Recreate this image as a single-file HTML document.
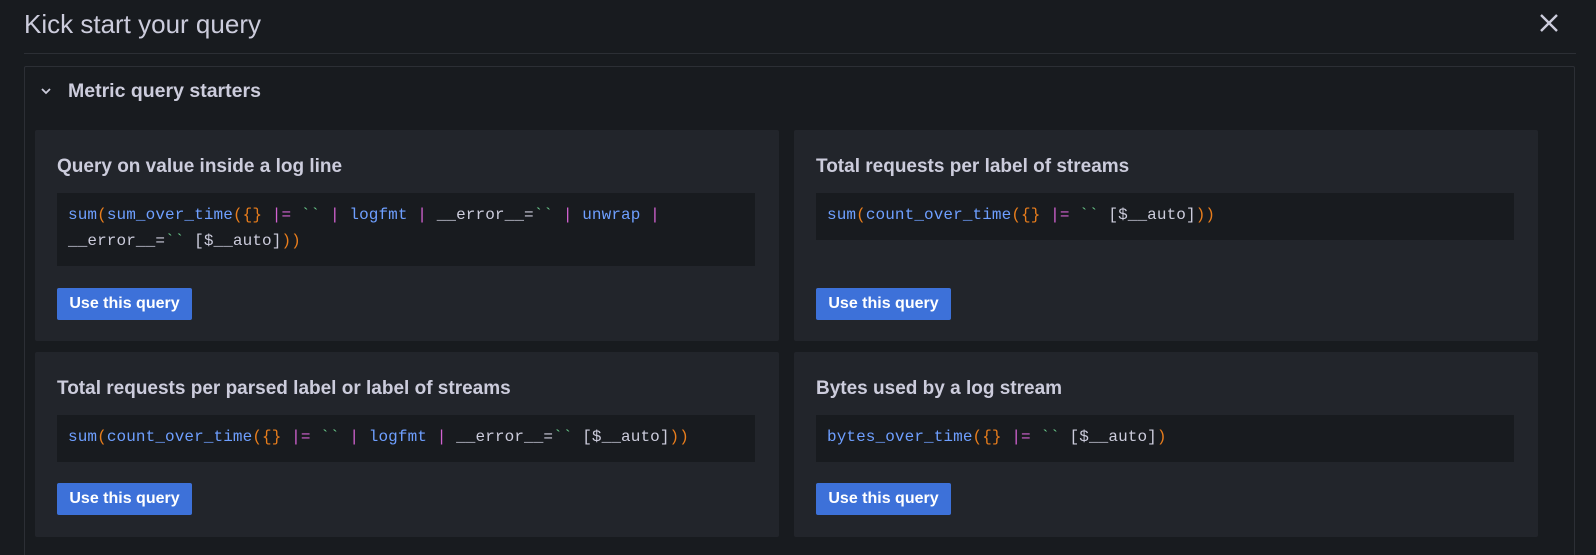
<!DOCTYPE html>
<html><head><style>
html,body{margin:0;width:1596px;height:555px;overflow:hidden}
body{background:#181b1f;font-family:"Liberation Sans",sans-serif;position:relative;color:#ccccdc}
.h{position:absolute;left:24px;top:9px;font-size:26px;color:#ccccdc}
.x{position:absolute;left:1537px;top:11px}
.hl{position:absolute;left:24px;top:53px;width:1552px;height:1px;background:#2c2f35}
.box{position:absolute;left:24px;top:66px;width:1551px;height:489px;border:1px solid #2c2f35;border-bottom:none;border-radius:2px 2px 0 0;box-sizing:border-box}
.sec{position:absolute;left:68px;top:80px;font-size:19.5px;font-weight:bold;color:#ccccdc}
.chev{position:absolute;left:40px;top:86px}
.card{position:absolute;background:#22252b;width:744px;border-radius:2px}
.t{position:absolute;left:22px;top:26px;font-size:19px;font-weight:bold;color:#ccccdc}
.code{position:absolute;left:22px;top:63px;width:676px;padding:9px 11px;background:#181b1f;font-family:"Liberation Mono",monospace;font-size:16px;letter-spacing:0.1px;line-height:26px;color:#ccccdc;white-space:pre-wrap}
.btn{position:absolute;left:22px;width:135px;height:32px;background:#3d71d9;color:#fff;font-size:16px;font-weight:bold;line-height:32px;text-align:center;border-radius:2px}
.f{color:#6e9fff}.o{color:#e87d1c}.p{color:#d262d1}.g{color:#6ccf8e}
</style></head><body>
<div class="h">Kick start your query</div>
<svg class="x" width="24" height="24" viewBox="0 0 24 24"><path d="M4 4L20 20M20 4L4 20" stroke="#ccccdc" stroke-width="2.4"/></svg>
<div class="hl"></div>
<div class="box"></div>
<svg class="chev" width="12" height="10" viewBox="0 0 12 10"><path d="M2 3L6 7L10 3" stroke="#ccccdc" stroke-width="1.8" fill="none"/></svg>
<div class="sec">Metric query starters</div>

<div class="card" style="left:35px;top:130px;height:211px">
<div class="t">Query on value inside a log line</div>
<div class="code" style="height:55px"><span class="f">sum</span><span class="o">(</span><span class="f">sum_over_time</span><span class="o">({}</span> <span class="p">|=</span> <span class="g">``</span> <span class="p">|</span> <span class="f">logfmt</span> <span class="p">|</span> __error__=<span class="g">``</span> <span class="p">|</span> <span class="f">unwrap</span> <span class="p">|</span>
__error__=<span class="g">``</span> [$__auto]<span class="o">))</span></div>
<div class="btn" style="top:158px">Use this query</div>
</div>

<div class="card" style="left:794px;top:130px;height:211px">
<div class="t">Total requests per label of streams</div>
<div class="code" style="height:29px"><span class="f">sum</span><span class="o">(</span><span class="f">count_over_time</span><span class="o">({}</span> <span class="p">|=</span> <span class="g">``</span> [$__auto]<span class="o">))</span></div>
<div class="btn" style="top:158px">Use this query</div>
</div>

<div class="card" style="left:35px;top:352px;height:185px">
<div class="t">Total requests per parsed label or label of streams</div>
<div class="code" style="height:29px"><span class="f">sum</span><span class="o">(</span><span class="f">count_over_time</span><span class="o">({}</span> <span class="p">|=</span> <span class="g">``</span> <span class="p">|</span> <span class="f">logfmt</span> <span class="p">|</span> __error__=<span class="g">``</span> [$__auto]<span class="o">))</span></div>
<div class="btn" style="top:131px">Use this query</div>
</div>

<div class="card" style="left:794px;top:352px;height:185px">
<div class="t">Bytes used by a log stream</div>
<div class="code" style="height:29px"><span class="f">bytes_over_time</span><span class="o">({}</span> <span class="p">|=</span> <span class="g">``</span> [$__auto]<span class="o">)</span></div>
<div class="btn" style="top:131px">Use this query</div>
</div>
</body></html>
